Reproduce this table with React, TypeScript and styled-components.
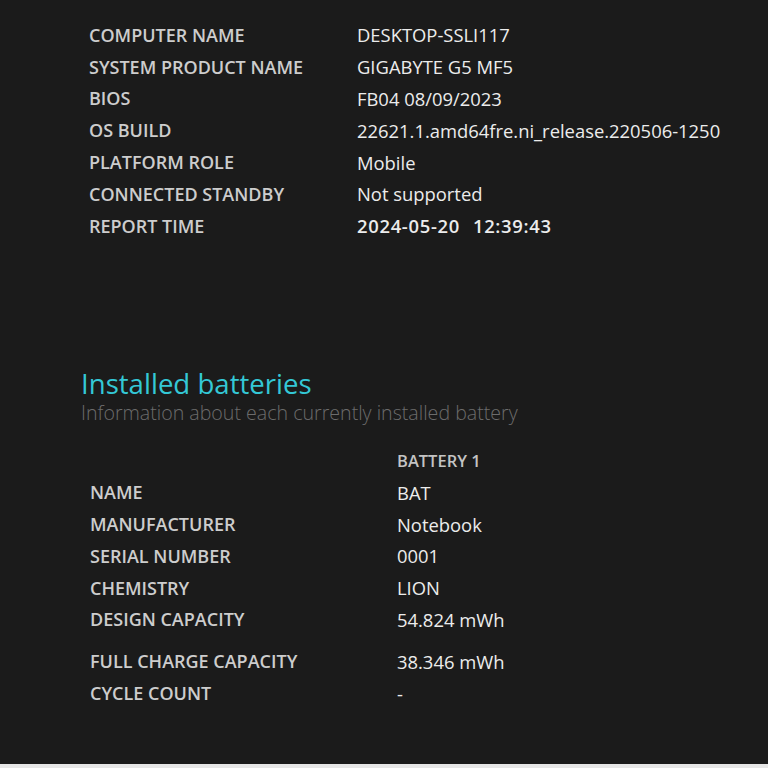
import React from "react";
import styled, { createGlobalStyle } from "styled-components";

const Global = createGlobalStyle`
  html, body { margin: 0; padding: 0; background: #1b1b1b; }
  body { font-family: "Open Sans", "Noto Sans", sans-serif; }
`;

const Page = styled.div`
  width: 768px;
  height: 768px;
  box-sizing: border-box;
  background: #1b1b1b;
  border-bottom: 4px solid #e6e6e6;
  padding: 19px 0 0 89px;
  overflow: hidden;
`;

const InfoTable = styled.div<{ $labelWidth: number }>`
  display: grid;
  grid-template-columns: ${(p) => p.$labelWidth}px auto;
  grid-auto-rows: 31.8px;
  align-items: center;
`;

const Label = styled.div`
  font-size: 18px;
  font-weight: 550;
  color: #cdcdcd;
  text-transform: uppercase;
  white-space: nowrap;
`;

const Value = styled.div<{ $bold?: boolean }>`
  font-size: 18.4px;
  color: #ececec;
  font-weight: ${(p) => (p.$bold ? 650 : 400)};
  letter-spacing: ${(p) => (p.$bold ? "0.7px" : "0")};
  word-spacing: ${(p) => (p.$bold ? "1px" : "0")};
  white-space: pre;
`;

const Section = styled.section`
  margin-top: 126px;
  margin-left: -8px;
`;

const Title = styled.h2`
  margin: 0;
  font-size: 27.6px;
  font-weight: 400;
  color: #34c8d6;
  line-height: 30px;
`;

const Subtitle = styled.div`
  font-size: 19.6px;
  font-weight: 300;
  color: #6c6c6c;
  line-height: 30px;
`;

const BatteryTable = styled(InfoTable)<{ $gap?: number }>`
  margin-top: ${(p) => p.$gap ?? 18}px;
  margin-left: 9px;
`;

const HeadCell = styled.div`
  font-size: 16.5px;
  font-weight: 550;
  color: #c4c4c4;
  text-transform: uppercase;
`;

const info: [string, string, boolean?][] = [
  ["Computer name", "DESKTOP-SSLI117"],
  ["System product name", "GIGABYTE G5 MF5"],
  ["BIOS", "FB04 08/09/2023"],
  ["OS build", "22621.1.amd64fre.ni_release.220506-1250"],
  ["Platform role", "Mobile"],
  ["Connected standby", "Not supported"],
  ["Report time", "2024-05-20  12:39:43", true],
];

const battery: [string, string][] = [
  ["Name", "BAT"],
  ["Manufacturer", "Notebook"],
  ["Serial number", "0001"],
  ["Chemistry", "LION"],
  ["Design capacity", "54.824 mWh"],
];

export default function App() {
  return (
    <>
      <Global />
      <Page>
        <InfoTable $labelWidth={268}>
          {info.map(([l, v, b]) => (
            <React.Fragment key={l}>
              <Label>{l}</Label>
              <Value $bold={b}>{v}</Value>
            </React.Fragment>
          ))}
        </InfoTable>
        <Section>
          <Title>Installed batteries</Title>
          <Subtitle>Information about each currently installed battery</Subtitle>
          <BatteryTable $labelWidth={307} $gap={17}>
            <div />
            <HeadCell>Battery 1</HeadCell>
            {battery.map(([l, v]) => (
              <React.Fragment key={l}>
                <Label>{l}</Label>
                <Value>{v}</Value>
              </React.Fragment>
            ))}
          </BatteryTable>
          <BatteryTable $labelWidth={307} $gap={10}>
            <Label>Full charge capacity</Label>
            <Value>38.346 mWh</Value>
            <Label>Cycle count</Label>
            <Value>-</Value>
          </BatteryTable>
        </Section>
      </Page>
    </>
  );
}
